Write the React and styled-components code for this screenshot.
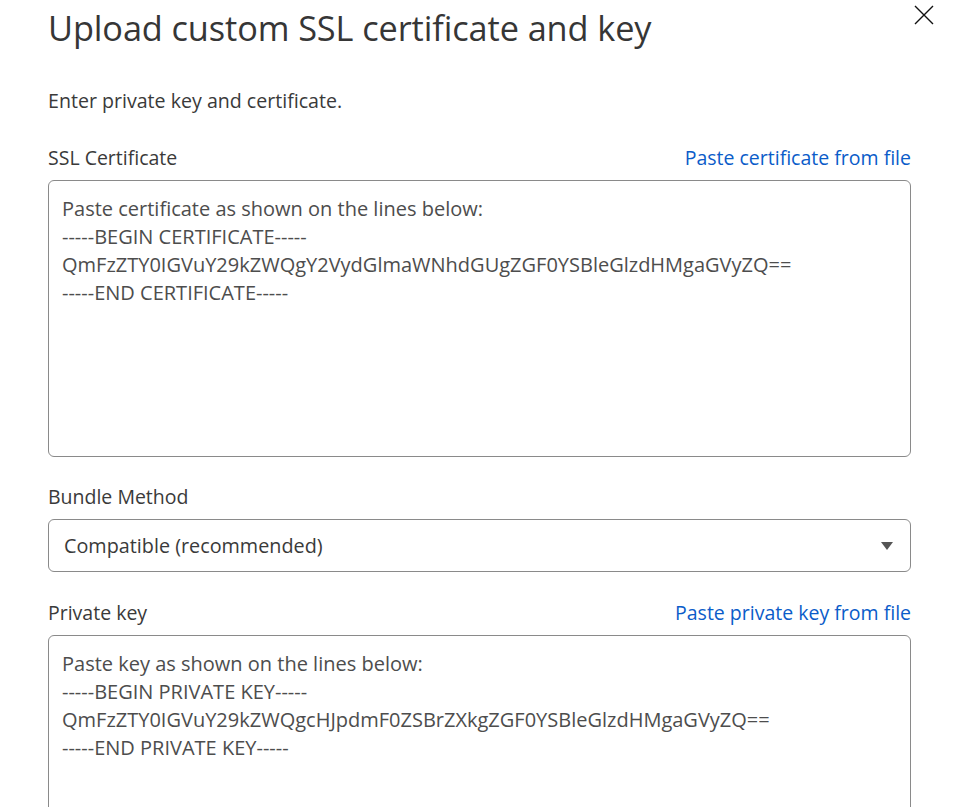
import styled, { createGlobalStyle } from 'styled-components';

const GlobalStyle = createGlobalStyle`
  html, body {
    margin: 0;
    background: #fff;
    font-family: "Open Sans", "Noto Sans", sans-serif;
    color: #333;
    overflow: hidden;
  }
`;

const Dialog = styled.div`
  position: relative;
  width: 957px;
  height: 807px;
  box-sizing: border-box;
  padding: 0 46px 0 48px;
  background: #fff;
`;

const Title = styled.h1`
  margin: 0;
  padding-top: 4px;
  font-size: 34.3px;
  font-weight: 400;
  line-height: 48px;
  color: #363636;
  letter-spacing: -0.1px;
`;

const CloseButton = styled.button`
  position: absolute;
  top: 5px;
  right: 23px;
  width: 20px;
  height: 20px;
  padding: 0;
  border: 0;
  background: none;
  cursor: pointer;
`;

const Intro = styled.p`
  margin: 36px 0 0;
  font-size: 19.6px;
  line-height: 26px;
  color: #3a3a3a;
`;

const Field = styled.div`
  margin-top: ${(p) => p.$gap}px;
`;

const LabelRow = styled.div`
  display: flex;
  justify-content: space-between;
  align-items: baseline;
  height: 26px;
  margin-bottom: 9px;
`;

const Label = styled.label`
  font-size: 19.5px;
  line-height: 26px;
  color: #3a3a3a;
`;

const FileLink = styled.a`
  font-size: 19.5px;
  line-height: 26px;
  color: #0b5cc9;
  text-decoration: none;
  cursor: pointer;
`;

const TextArea = styled.textarea`
  display: block;
  width: 100%;
  height: ${(p) => p.$height}px;
  box-sizing: border-box;
  padding: 14px 13px;
  border: 1px solid #8a8a8a;
  border-radius: 6px;
  font-family: inherit;
  font-size: 20px;
  line-height: 28px;
  color: #4d4d4d;
  resize: none;
  outline: none;
  overflow: hidden;

  &::placeholder {
    color: #4d4d4d;
    opacity: 1;
  }
`;

const SelectBox = styled.div`
  display: flex;
  align-items: center;
  justify-content: space-between;
  height: 53px;
  box-sizing: border-box;
  padding: 0 17px 0 15px;
  border: 1px solid #8a8a8a;
  border-radius: 6px;
  font-size: 19.8px;
  color: #3a3a3a;
  cursor: pointer;
`;

const Caret = styled.span`
  width: 0;
  height: 0;
  border-left: 6px solid transparent;
  border-right: 6px solid transparent;
  border-top: 8px solid #555;
`;

const certText = `Paste certificate as shown on the lines below:
-----BEGIN CERTIFICATE-----
QmFzZTY0IGVuY29kZWQgY2VydGlmaWNhdGUgZGF0YSBleGlzdHMgaGVyZQ==
-----END CERTIFICATE-----`;

const keyText = `Paste key as shown on the lines below:
-----BEGIN PRIVATE KEY-----
QmFzZTY0IGVuY29kZWQgcHJpdmF0ZSBrZXkgZGF0YSBleGlzdHMgaGVyZQ==
-----END PRIVATE KEY-----`;

export default function App() {
  return (
    <>
      <GlobalStyle />
      <Dialog>
        <Title>Upload custom SSL certificate and key</Title>
        <CloseButton aria-label="Close">
          <svg width="20" height="20" viewBox="0 0 20 20">
            <path d="M1 1L19 19M19 1L1 19" stroke="#111" strokeWidth="1.4" />
          </svg>
        </CloseButton>
        <Intro>Enter private key and certificate.</Intro>

        <Field $gap={31}>
          <LabelRow>
            <Label>SSL Certificate</Label>
            <FileLink>Paste certificate from file</FileLink>
          </LabelRow>
          <TextArea $height={277} placeholder={certText} />
        </Field>

        <Field $gap={27}>
          <LabelRow>
            <Label>Bundle Method</Label>
          </LabelRow>
          <SelectBox>
            <span>Compatible (recommended)</span>
            <Caret />
          </SelectBox>
        </Field>

        <Field $gap={28}>
          <LabelRow>
            <Label>Private key</Label>
            <FileLink>Paste private key from file</FileLink>
          </LabelRow>
          <TextArea $height={277} placeholder={keyText} />
        </Field>
      </Dialog>
    </>
  );
}
